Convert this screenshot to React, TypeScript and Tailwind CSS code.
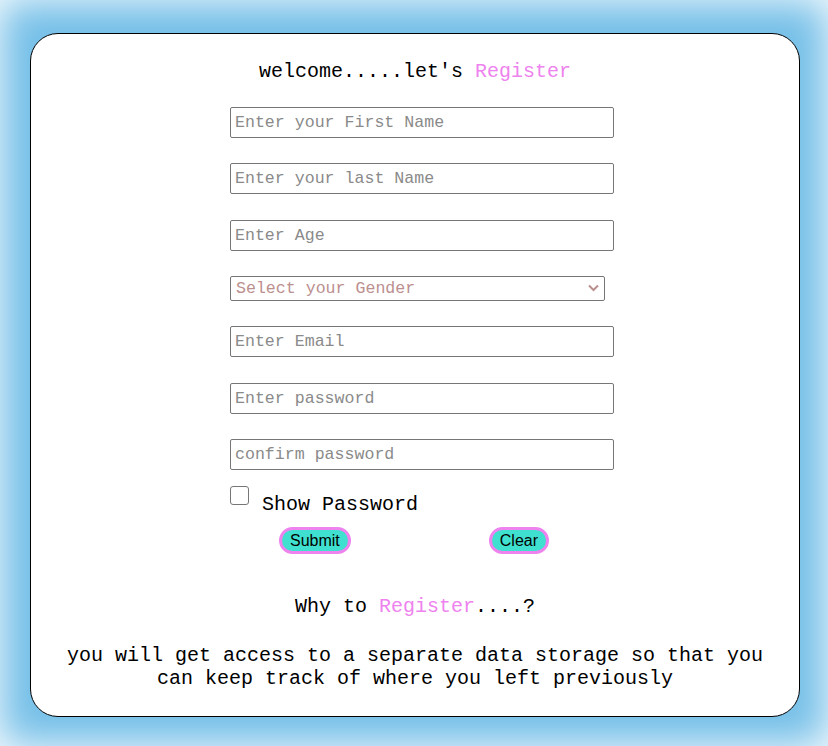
import React, { useState } from 'react';

const mono = "font-['Liberation_Mono','Courier_New',monospace]";

export default function App() {
  const [showPassword, setShowPassword] = useState(false);

  const inputClass =
    "block w-[384px] h-[31px] px-[4px] border border-[#767676] rounded-[2px] bg-white text-[16.6px] text-black placeholder:text-[#8a8a8a] outline-none " +
    mono;

  return (
    <div className="h-screen w-full bg-[#74bfe8] shadow-[inset_0_0_40px_white] pl-[30px] pr-[28px] pt-[33px] pb-[29px]">
      <div className={`h-full bg-white border border-black rounded-[28px] pt-[26px] ${mono}`}>
        {/* Heading */}
        <h1 className="text-center text-[20px] leading-[23px] text-black">
          welcome.....let's <span className="text-[#ee82ee]">Register</span>
        </h1>

        {/* Form */}
        <form className="pl-[199px] mt-[24px]" onSubmit={(e) => e.preventDefault()}>
          <input type="text" placeholder="Enter your First Name" className={inputClass} />
          <input type="text" placeholder="Enter your last Name" className={`${inputClass} mt-[25px]`} />
          <input type="text" placeholder="Enter Age" className={`${inputClass} mt-[26px]`} />

          <div className="relative w-[375px] mt-[25px]">
            <select
              defaultValue=""
              className={`block w-full h-[25px] pl-[5px] border border-[#767676] rounded-[2px] bg-white text-[16.6px] text-[#bc8f8f] appearance-none outline-none ${mono}`}
            >
              <option value="" disabled>
                Select your Gender
              </option>
              <option value="male">Male</option>
              <option value="female">Female</option>
              <option value="other">Other</option>
            </select>
            <svg
              className="absolute right-[6px] top-[8px] pointer-events-none"
              width="11"
              height="8"
              viewBox="0 0 11 8"
              fill="none"
            >
              <path d="M1 1.5 L5.5 6 L10 1.5" stroke="#bc8f8f" strokeWidth="2" />
            </svg>
          </div>

          <input type="email" placeholder="Enter Email" className={`${inputClass} mt-[25px]`} />
          <input
            type={showPassword ? 'text' : 'password'}
            placeholder="Enter password"
            className={`${inputClass} mt-[26px]`}
          />
          <input
            type={showPassword ? 'text' : 'password'}
            placeholder="confirm password"
            className={`${inputClass} mt-[25px]`}
          />

          {/* Show password */}
          <label className="flex items-start mt-[16px]">
            <input
              type="checkbox"
              checked={showPassword}
              onChange={(e) => setShowPassword(e.target.checked)}
              className="w-[19px] h-[19px] appearance-none border border-[#767676] rounded-[3px] bg-white"
            />
            <span className="ml-[13px] mt-[7px] text-[20px] leading-[23px] text-black">Show Password</span>
          </label>

          {/* Buttons */}
          <div className="flex mt-[11px] font-['Liberation_Sans',Arial,sans-serif]">
            <button
              type="submit"
              className="ml-[49px] h-[27px] px-[8px] bg-[#40e0d0] border-[3px] border-[#ee82ee] rounded-full text-[16px] leading-[18px] text-black"
            >
              Submit
            </button>
            <button
              type="reset"
              className="ml-[138px] h-[27px] px-[8px] bg-[#40e0d0] border-[3px] border-[#ee82ee] rounded-full text-[16px] leading-[18px] text-black"
            >
              Clear
            </button>
          </div>
        </form>

        {/* Why register */}
        <h2 className="mt-[41px] text-center text-[20px] leading-[23px] text-black">
          Why to <span className="text-[#ee82ee]">Register</span>....?
        </h2>
        <p className="mt-[26px] px-[30px] text-center text-[20px] leading-[23px] text-black">
          you will get access to a separate data storage so that you can keep track of where you left previously
        </p>
      </div>
    </div>
  );
}
